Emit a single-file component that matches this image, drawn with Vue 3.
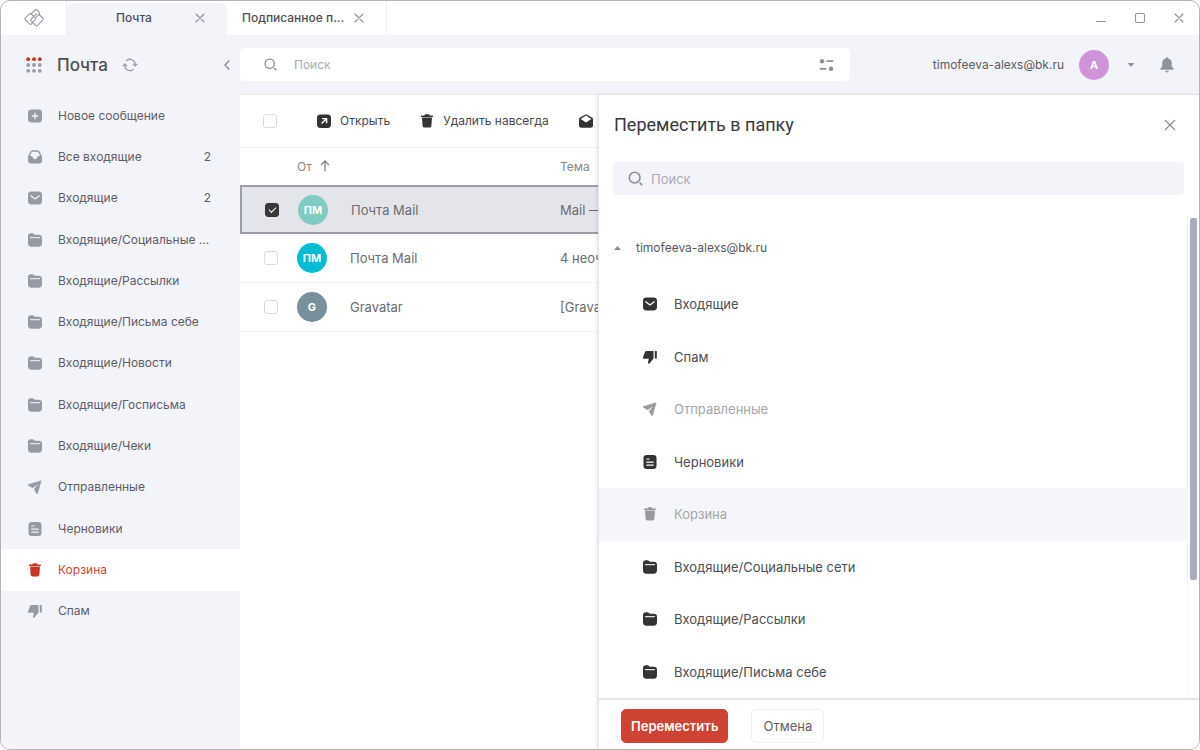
<script setup>
import { ref } from 'vue'

const folders = [
  { icon: 'plus', name: 'Новое сообщение' },
  { icon: 'tray', name: 'Все входящие', count: 2 },
  { icon: 'mail', name: 'Входящие', count: 2 },
  { icon: 'folder', name: 'Входящие/Социальные ...' },
  { icon: 'folder', name: 'Входящие/Рассылки' },
  { icon: 'folder', name: 'Входящие/Письма себе' },
  { icon: 'folder', name: 'Входящие/Новости' },
  { icon: 'folder', name: 'Входящие/Госписьма' },
  { icon: 'folder', name: 'Входящие/Чеки' },
  { icon: 'plane', name: 'Отправленные' },
  { icon: 'draft', name: 'Черновики' },
  { icon: 'trash', name: 'Корзина', active: true },
  { icon: 'thumb', name: 'Спам' }
]

const targets = [
  { icon: 'mail', name: 'Входящие' },
  { icon: 'thumb', name: 'Спам' },
  { icon: 'plane', name: 'Отправленные', disabled: true },
  { icon: 'draft', name: 'Черновики' },
  { icon: 'trash', name: 'Корзина', disabled: true, current: true },
  { icon: 'folder', name: 'Входящие/Социальные сети' },
  { icon: 'folder', name: 'Входящие/Рассылки' },
  { icon: 'folder', name: 'Входящие/Письма себе' }
]

const mails = ref([
  { from: 'Почта Mail', initials: 'ПМ', tone: 'mint', subject: 'Mail —', checked: true },
  { from: 'Почта Mail', initials: 'ПМ', tone: 'cyan', subject: '4 неоч', checked: false },
  { from: 'Gravatar', initials: 'G', tone: 'slate', subject: '[Grava', checked: false }
])
const query = ref('')
const folderQuery = ref('')
const all = ref(false)
</script>

<template>
  <svg class="sprite" aria-hidden="true">
    <symbol id="plus" viewBox="0 0 14 14">
      <rect x="0" y="0.5" width="14" height="13" rx="3.4" fill="currentColor" />
      <path d="M7 3.8v6.4M3.8 7h6.4" stroke="var(--cut)" stroke-width="1.4" />
    </symbol>
    <symbol id="tray" viewBox="0 0 14 14">
      <path d="M4.6.3h4.800a2.600 2.600 0 0 1 2.300 1.500L13.600 5.500a4 4 0 0 1 .4 1.700V10.600A3 3 0 0 1 11 13.600H3A3 3 0 0 1 0 10.600V7.200a4 4 0 0 1 .4-1.700L2.300 1.800A2.600 2.600 0 0 1 4.600.3z" fill="currentColor" />
      <path d="M4.700 1.700h4.600a1.400 1.400 0 0 1 1.200.7l1.700 3.500h-1.500c-.8 0-1.200.5-1.400 1.100-.3 1.400-1.100 2.200-2.300 2.200S5 8.400 4.700 7C4.500 6.400 4.100 5.900 3.300 5.900H1.800l1.700-3.500a1.400 1.400 0 0 1 1.200-.7z" fill="var(--cut)" />
    </symbol>
    <symbol id="mail" viewBox="0 0 14 14">
      <rect x="0" y="0.500" width="14" height="13" rx="3.400" fill="currentColor" />
      <path d="M2.800 4.800 7 7.900l4.200-3.100" fill="none" stroke="var(--cut)" stroke-width="1.300" stroke-linecap="round" stroke-linejoin="round" />
    </symbol>
    <symbol id="folder" viewBox="0 0 14 14">
      <path d="M0 3.200A2.900 2.900 0 0 1 2.900.2h1.600c1.400 0 1.500 1.500 2.900 1.500h3.400A3.200 3.200 0 0 1 14 4.900v5.400a3.400 3.400 0 0 1-3.400 3.400H3.400A3.400 3.400 0 0 1 0 10.300z" fill="currentColor" />
      <path d="M2.500 4.600h9" stroke="var(--cut)" stroke-width="1.300" stroke-linecap="round" opacity=".85" />
    </symbol>
    <symbol id="plane" viewBox="0 0 14 14">
      <path d="M13.200.7 9.600 13.300a.5.5 0 0 1-1 .1L6.200 9.200 11 3.400 4.700 7.700.5 5.400a.5.5 0 0 1 .1-1z" fill="currentColor" stroke="currentColor" stroke-width=".5" stroke-linejoin="round" />
    </symbol>
    <symbol id="draft" viewBox="0 0 14 14">
      <rect x=".5" y="0" width="13" height="14" rx="3.200" fill="currentColor" />
      <path d="M3.800 4h2.200M3.800 7.200h6.400M3.800 10.200h6.400" stroke="var(--cut)" stroke-width="1.200" stroke-linecap="round" />
    </symbol>
    <symbol id="trash" viewBox="0 0 14 14">
      <path d="M4.200 1.600 5.300.3h3.400l1.100 1.300h2.700c.7 0 .9 1.400 0 1.400h-11c-.9 0-.7-1.400 0-1.400z" fill="currentColor" />
      <path d="M2 3.600h10l-.6 8.200a1.900 1.900 0 0 1-1.900 1.800h-5a1.900 1.900 0 0 1-1.900-1.800z" fill="currentColor" />
    </symbol>
    <symbol id="thumb" viewBox="0 0 14 14">
      <path d="M3.600.9h6.900v7.500l-3.800 4.800a.9.9 0 0 1-1.600-.9l.7-3.500H1.300A1.300 1.300 0 0 1 0 7.200L2 2a1.700 1.700 0 0 1 1.600-1.100z" fill="currentColor" />
      <rect x="11.800" y=".9" width="2" height="7.700" rx=".5" fill="currentColor" />
    </symbol>
    <symbol id="open" viewBox="0 0 14 14">
      <rect x="0" y=".5" width="14" height="13.500" rx="3.400" fill="currentColor" />
      <path d="M5 4.600h4.600v4.600M9.400 4.800 4.600 9.600" fill="none" stroke="var(--cut)" stroke-width="1.400" />
    </symbol>
    <symbol id="read" viewBox="0 0 14 14">
      <path d="M7 .2 13 3.600a2 2 0 0 1 1 1.700v6a2.500 2.500 0 0 1-2.500 2.500h-9A2.500 2.500 0 0 1 0 11.300v-6a2 2 0 0 1 1-1.700z" fill="currentColor" />
      <path d="M7 1.600 12.300 5 7 8.600 1.700 5z" fill="var(--cut)" />
    </symbol>
    <symbol id="search" viewBox="0 0 14 14">
      <circle cx="6.200" cy="6.200" r="5" fill="none" stroke="currentColor" stroke-width="1.500" />
      <path d="m11.400 11.400 1.300 1.300" stroke="currentColor" stroke-width="1.700" stroke-linecap="round" />
    </symbol>
    <symbol id="cross" viewBox="0 0 12 12">
      <path d="m2 2 8 8m0-8-8 8" stroke="currentColor" stroke-width="1.100" stroke-linecap="round" />
    </symbol>
  </svg>

  <div class="window">
    <header class="tabs">
      <div class="logo">
        <svg width="20" height="20" viewBox="0 0 20 20" fill="none" stroke="currentColor" stroke-width="1.200" stroke-linejoin="round" stroke-linecap="round">
          <path d="M6.800 6.200 11 2a1.500 1.500 0 0 1 2.100 0l2 2.100a1.500 1.500 0 0 1 0 2L12 9.300" />
          <path d="M8.700 14.700 7.500 15.900a1.500 1.500 0 0 1-2.100 0l-4-3.900a1.500 1.500 0 0 1 0-2.100l4-3.800a1.500 1.500 0 0 1 2.100 0l3.700 3.700a1.500 1.500 0 0 1 0 2.100L9 14" />
          <path d="M14.800 6.300 18.700 10a1.500 1.500 0 0 1 0 2.100l-5 5.300a1.500 1.500 0 0 1-2.100 0l-4.300-4.300a1.500 1.500 0 0 1 0-2.100L12.200 6" />
        </svg>
      </div>
      <div class="tab active">
        <button class="tab-name" type="button">Почта</button>
        <button class="plain" type="button" aria-label="Закрыть вкладку"><svg width="12" height="12"><use href="#cross" /></svg></button>
      </div>
      <div class="tab second">
        <button class="tab-name" type="button">Подписанное п...</button>
        <button class="plain" type="button" aria-label="Закрыть вкладку"><svg width="12" height="12"><use href="#cross" /></svg></button>
      </div>
      <div class="controls">
        <button class="plain" type="button" aria-label="Свернуть"><svg width="12" height="12" viewBox="0 0 12 12"><path d="M1 9.500h10" stroke="currentColor" /></svg></button>
        <button class="plain" type="button" aria-label="Развернуть"><svg width="12" height="12" viewBox="0 0 12 12"><rect x="1.500" y="1.500" width="9" height="9" rx="1.500" fill="none" stroke="currentColor" stroke-width="1.100" /></svg></button>
        <button class="plain" type="button" aria-label="Закрыть"><svg width="12" height="12"><use href="#cross" /></svg></button>
      </div>
    </header>

    <div class="body">
      <aside class="sidebar">
        <div class="brand">
          <button class="plain" type="button" aria-label="Приложения">
            <svg width="16" height="16" viewBox="0 0 16 16">
              <g fill="#cf2f22"><circle cx="2.200" cy="2.200" r="1.900" /><circle cx="8" cy="2.200" r="1.900" /><circle cx="13.800" cy="2.200" r="1.900" /></g>
              <g fill="#989ca6"><circle cx="2.200" cy="8" r="1.900" /><circle cx="8" cy="8" r="1.900" /><circle cx="13.800" cy="8" r="1.900" /><circle cx="2.200" cy="13.800" r="1.900" /><circle cx="8" cy="13.800" r="1.900" /><circle cx="13.800" cy="13.800" r="1.900" /></g>
            </svg>
          </button>
          <h1>Почта</h1>
          <button class="plain refresh" type="button" aria-label="Обновить">
            <svg width="16" height="14" viewBox="0 0 16 14" fill="none" stroke="currentColor" stroke-width="1.300" stroke-linecap="round" stroke-linejoin="round">
              <path d="M4.800 2.500A5.100 5.100 0 0 1 13.100 7v.8M11.200 11.500A5.100 5.100 0 0 1 2.900 7v-.8" />
              <path d="m11.300 6.200 1.800 1.700 1.800-1.700M1.100 7.800l1.800-1.700 1.800 1.700" />
            </svg>
          </button>
          <button class="plain collapse" type="button" aria-label="Свернуть панель">
            <svg width="8" height="12" viewBox="0 0 8 12" fill="none" stroke="currentColor" stroke-width="1.400"><path d="M6.300 1.500 2 6l4.300 4.500" /></svg>
          </button>
        </div>
        <nav>
          <a v-for="f in folders" :key="f.name" href="#" :class="{ active: f.active }">
            <svg width="14" height="14"><use :href="'#' + f.icon" /></svg>
            <span>{{ f.name }}</span>
            <span v-if="f.count" class="count">{{ f.count }}</span>
          </a>
        </nav>
      </aside>

      <main>
        <div class="topbar">
          <label class="search">
            <svg width="13" height="13"><use href="#search" /></svg>
            <input v-model="query" type="text" placeholder="Поиск" aria-label="Поиск">
            <svg class="filter" width="15" height="14" viewBox="0 0 15 14" fill="currentColor">
              <circle cx="3" cy="3.200" r="2.200" /><circle cx="12" cy="10.800" r="2.200" />
              <rect x="7.500" y="2.300" width="7" height="1.800" rx=".9" /><rect x=".5" y="9.900" width="7" height="1.800" rx=".9" />
            </svg>
          </label>
          <div class="account">
            <span>timofeeva-alexs@bk.ru</span>
            <span class="avatar plum">А</span>
            <button class="plain caret" type="button" aria-label="Меню аккаунта"><svg width="8" height="4" viewBox="0 0 8 4"><path d="M.5 0h7L4 4z" fill="currentColor" /></svg></button>
            <button class="plain" type="button" aria-label="Уведомления">
              <svg width="14" height="16" viewBox="0 0 14 16" fill="currentColor"><path d="M7 .3a1.200 1.200 0 0 1 1.200 1.200A4.800 4.800 0 0 1 11.800 6v3.600l1.700 1.800c.4.500.2 1.300-.6 1.300H1.100c-.8 0-1-.8-.6-1.300l1.700-1.800V6a4.800 4.800 0 0 1 3.600-4.500A1.200 1.200 0 0 1 7 .3zM5.200 13.700h3.600a1.800 1.800 0 0 1-3.600 0z" /></svg>
            </button>
          </div>
        </div>

        <div class="workspace">
          <section class="list">
            <div class="toolbar">
              <input v-model="all" type="checkbox" aria-label="Выбрать все">
              <button type="button" class="plain"><svg width="14" height="14"><use href="#open" /></svg>Открыть</button>
              <button type="button" class="plain"><svg width="14" height="14"><use href="#trash" /></svg>Удалить навсегда</button>
              <button type="button" class="plain" aria-label="Отметить прочитанным"><svg width="14" height="14"><use href="#read" /></svg></button>
            </div>
            <table>
              <thead>
                <tr>
                  <th class="pick"></th>
                  <th class="from">От <svg width="10" height="12" viewBox="0 0 10 12" fill="none" stroke="currentColor" stroke-width="1.300"><path d="M5 11.500V1M1 5l4-4 4 4" /></svg></th>
                  <th>Тема</th>
                </tr>
              </thead>
              <tbody>
                <tr v-for="m in mails" :key="m.subject" :class="{ selected: m.checked }">
                  <td><input v-model="m.checked" type="checkbox" :aria-label="m.from"></td>
                  <td><div class="sender"><span class="avatar" :class="m.tone">{{ m.initials }}</span>{{ m.from }}</div></td>
                  <td>{{ m.subject }}</td>
                </tr>
              </tbody>
            </table>
          </section>

          <section class="panel" role="dialog" aria-labelledby="move-title">
            <div class="panel-head">
              <h2 id="move-title">Переместить в папку</h2>
              <button class="plain" type="button" aria-label="Закрыть"><svg width="14" height="14"><use href="#cross" /></svg></button>
            </div>
            <label class="panel-search">
              <svg width="15" height="15"><use href="#search" /></svg>
              <input v-model="folderQuery" type="text" placeholder="Поиск" aria-label="Поиск папки">
            </label>
            <div class="tree">
              <div class="branches">
                <button class="plain owner" type="button">
                  <svg width="7" height="4" viewBox="0 0 7 4"><path d="M0 4h7L3.500 0z" fill="currentColor" /></svg>
                  <span>timofeeva-alexs@bk.ru</span>
                </button>
                <div class="targets">
                  <button v-for="t in targets" :key="t.name" type="button" class="plain" :class="{ current: t.current }" :disabled="t.disabled">
                    <svg width="14" height="14"><use :href="'#' + t.icon" /></svg>{{ t.name }}
                  </button>
                </div>
              </div>
              <div class="track"><div class="thumb"></div></div>
            </div>
            <footer>
              <button class="primary" type="button">Переместить</button>
              <button class="secondary" type="button">Отмена</button>
            </footer>
          </section>
        </div>
      </main>
    </div>
  </div>
</template>

<style>
body {
  background: #fff;
}
</style>

<style scoped>
* {
  box-sizing: border-box;
}
.sprite {
  position: absolute;
  width: 0;
  height: 0;
}
svg {
  display: block;
  flex: none;
}
.window {
  --cut: #fff;
  display: flex;
  flex-direction: column;
  min-height: 100vh;
  border: 1px solid #b4b4b6;
  border-radius: 10px;
  overflow: hidden;
  background: #fff;
  color: #58585c;
  font: 12px/20px Inter, "Liberation Sans", sans-serif;
}
button,
input {
  font: inherit;
  color: inherit;
}
button {
  cursor: pointer;
}
.plain {
  display: flex;
  align-items: center;
  padding: 0;
  border: 0;
  background: none;
}
a {
  color: inherit;
  text-decoration: none;
}

.tabs {
  display: flex;
  height: 34px;
  color: #8d919b;
}
.logo {
  display: flex;
  align-items: center;
  justify-content: center;
  width: 66px;
  border-right: 1px solid #ededf2;
  color: #9d9fa6;
}
.tab {
  display: flex;
  align-items: center;
  width: 160px;
}
.tab-name {
  flex: 1;
  padding: 0;
  border: 0;
  background: none;
  color: #4d4e52;
  font-weight: 500;
}
.tab.active {
  margin-top: 2px;
  padding: 0 21px 2px 7px;
  border-radius: 6px 6px 0 0;
  background: #f3f4fa;
}
.tab.second {
  padding: 0 21px 0 15px;
  border-right: 1px solid #ededf2;
}
.tab.second .tab-name {
  text-align: left;
  white-space: nowrap;
}
.controls {
  display: flex;
  gap: 27px;
  margin-left: auto;
  padding-right: 14px;
}

.body {
  display: flex;
  flex: 1;
}
.sidebar {
  --cut: #f3f4fa;
  flex: 0 0 239px;
  min-width: 0;
  background: #f3f4fa;
}
.brand {
  display: flex;
  align-items: center;
  height: 60px;
  padding: 0 9px 0 25px;
}
h1 {
  margin: 0 14px 0 15px;
  color: #4d4e52;
  font-size: 17px;
  font-weight: 500;
}
.refresh {
  color: #989ca6;
}
.collapse {
  margin-left: auto;
  color: #888c95;
}
nav {
  display: grid;
  grid-auto-rows: 1fr;
  height: 537px;
}
nav a {
  display: flex;
  align-items: center;
  padding: 0 24px 0 27px;
  gap: 16px;
  color: #5f5c66;
  white-space: nowrap;
}
nav a svg {
  color: #959aa5;
}
nav a .count {
  margin: 0 5px 0 auto;
}
nav a.active {
  background: #fff;
  color: #cf4332;
}
nav a.active svg {
  color: #cf3322;
}

main {
  display: flex;
  flex: 1;
  flex-direction: column;
  min-width: 0;
}
.topbar {
  display: flex;
  align-items: center;
  justify-content: space-between;
  height: 60px;
  padding-right: 25px;
  border-bottom: 1px solid #eaebf1;
  background: #f3f4fa;
}
.search {
  display: flex;
  align-items: center;
  flex: 0 1 610px;
  height: 33px;
  padding: 0 16px 0 24px;
  border-radius: 5px;
  background: #fff;
  color: #8d919b;
}
input[type="text"] {
  flex: 1;
  min-width: 0;
  padding: 0;
  border: 0;
  outline: 0;
  background: none;
}
.search input {
  margin-left: 17px;
}
input::placeholder {
  color: #a9abb2;
  opacity: 1;
}
.account {
  display: flex;
  align-items: center;
  color: #5c5c5e;
}
.account .plain {
  color: #8f939d;
}
.account .avatar {
  margin: 0 18px 0 15px;
}
.caret {
  margin-right: 25px;
}
.avatar {
  display: flex;
  align-items: center;
  justify-content: center;
  flex: none;
  width: 30px;
  height: 30px;
  border-radius: 50%;
  color: #fff;
  font-size: 11px;
  font-weight: 700;
}
.plum {
  background: #ce93d8;
}
.mint {
  background: #80cbc4;
}
.cyan {
  background: #00bcd4;
}
.slate {
  background: #78909c;
}

.workspace {
  display: flex;
  flex: 1;
}
.list {
  flex: 1;
  min-width: 0;
  overflow: hidden;
}
.toolbar {
  display: flex;
  align-items: center;
  height: 53px;
  padding-left: 23px;
  border-bottom: 1px solid #f0f0f3;
}
.toolbar .plain {
  flex: none;
  gap: 9px;
  margin-right: 30px;
  color: #47484c;
  white-space: nowrap;
}
.toolbar input {
  margin-right: 40px;
}
.toolbar svg {
  color: #333335;
}
input[type="checkbox"] {
  display: block;
  flex: none;
  width: 14px;
  height: 14px;
  margin-top: 0;
  margin-bottom: 0;
  margin-left: 0;
  border: 1px solid #d9dae1;
  border-radius: 3px;
  background: #fff;
  appearance: none;
}
input[type="checkbox"]:checked {
  display: grid;
  place-items: center;
  border-color: #38383a;
  background: #38383a;
}
input[type="checkbox"]:checked::before {
  content: "";
  width: 6px;
  height: 3px;
  margin-bottom: 2px;
  border: solid #fff;
  border-width: 0 0 1px 1px;
  transform: rotate(-45deg);
}
table {
  width: 100%;
  table-layout: fixed;
  border-spacing: 0;
}
th {
  height: 37px;
  padding: 0;
  color: #85868b;
  font-weight: 400;
  text-align: left;
  white-space: nowrap;
}
th svg {
  display: inline-block;
  margin-left: 5px;
  vertical-align: -1px;
}
.pick {
  width: 57px;
}
.from {
  width: 263px;
}
td {
  height: 49px;
  padding: 0;
  border-bottom: 1px solid #f3f3f6;
  color: #6b6b70;
  font-size: 13px;
  white-space: nowrap;
}
td:first-child {
  padding-left: 24px;
}
.sender {
  display: flex;
  align-items: center;
  gap: 23px;
}
.selected td {
  border-top: 2px solid #9a9ea8;
  border-bottom: 2px solid #9a9ea8;
  background: #e4e5eb;
}
.selected td:first-child {
  padding-left: 23px;
  border-left: 2px solid #9a9ea8;
}
.selected .sender {
  padding-left: 1px;
}

.panel {
  display: flex;
  flex: 0 0 601px;
  flex-direction: column;
  border-left: 1px solid #e6e6ea;
  box-shadow: -1px 0 3px rgba(0, 0, 0, 0.12);
  background: #fff;
  z-index: 1;
}
.panel-head {
  display: flex;
  align-items: center;
  justify-content: space-between;
  height: 60px;
  padding: 0 22px 0 15px;
}
.panel-head .plain {
  color: #85868f;
}
h2 {
  margin: 0;
  color: #38383a;
  font: 400 18px/24px Roboto, Inter, sans-serif;
}
.panel-search {
  display: flex;
  align-items: center;
  gap: 8px;
  height: 33px;
  margin: 7px 15px 23px 14px;
  padding: 0 15px;
  border-radius: 4px;
  background: #f3f4fa;
  color: #8d8f9b;
  font-size: 13px;
}
.tree {
  display: flex;
  flex: 1;
}
.branches {
  flex: 1;
}
.owner {
  gap: 15px;
  height: 60px;
  padding-left: 15px;
}
.owner svg {
  color: #888c95;
}
.targets {
  display: grid;
  grid-auto-rows: 1fr;
  height: 420px;
}
.targets .plain {
  gap: 17px;
  padding-left: 44px;
  color: #4d4e52;
  font-size: 13px;
}
.targets svg {
  color: #333335;
}
.targets .plain:disabled {
  color: #a5a5a9;
}
.targets .plain:disabled svg {
  color: #98989b;
}
.targets .current {
  background: #f5f6fa;
}
.track {
  width: 12px;
  padding-left: 2px;
  border-left: 1px solid #f5f5f9;
}
.thumb {
  width: 7px;
  height: 362px;
  border-radius: 2px;
  background: #a9adbc;
}
footer {
  display: flex;
  align-items: center;
  gap: 23px;
  height: 51px;
  padding: 2px 22px 0;
  border-top: 2px solid #e4e5ea;
}
.primary,
.secondary {
  height: 34px;
  padding: 0 9px;
  border: 1px solid #cf4332;
  border-radius: 5px;
  background: #cf4332;
  color: #fff;
  font-size: 13px;
  font-weight: 600;
}
.secondary {
  padding: 0 11px;
  border-color: #eef0f8;
  background: #fff;
  color: #5f5f64;
  font-weight: 400;
}
</style>
